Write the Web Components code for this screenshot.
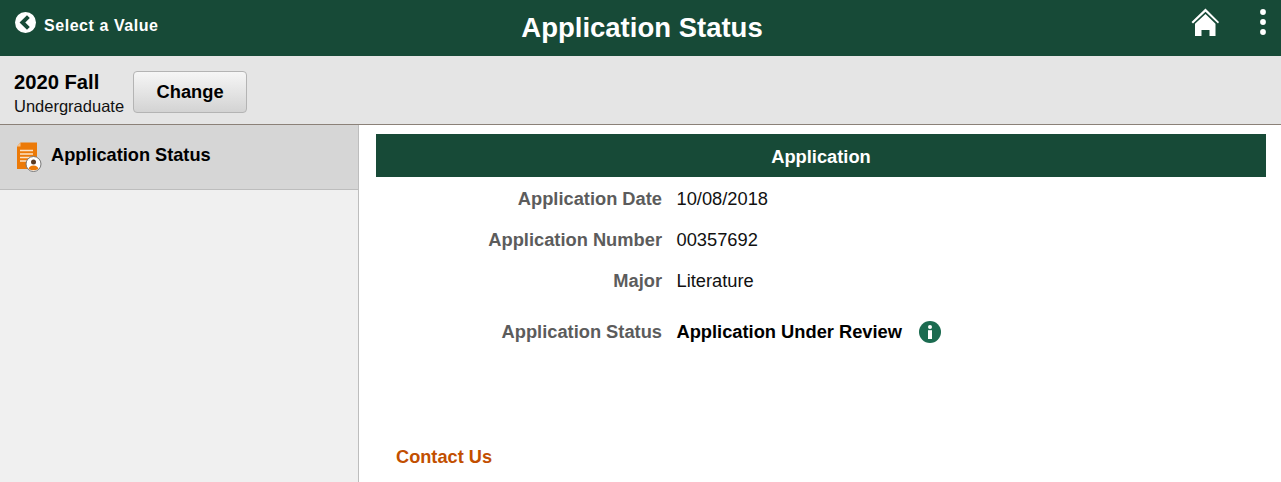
<!DOCTYPE html>
<html lang="en">
<head>
<meta charset="utf-8">
<title>Application Status</title>
<style>
  html, body { margin: 0; height: 100%; overflow: hidden; }
  body { font-family: "Liberation Sans", Arial, sans-serif; display: flex; flex-direction: column; }
</style>
</head>
<body>
<app-banner title-text="Application Status" back-text="Select a Value"></app-banner>
<term-bar term="2020 Fall" career="Undergraduate"></term-bar>
<app-layout>
  <side-nav slot="side" label="Application Status"></side-nav>
  <status-panel slot="main"></status-panel>
</app-layout>

<script>
class AppBanner extends HTMLElement {
  constructor() {
    super();
    this.attachShadow({ mode: "open" });
  }

  connectedCallback() {
    this.shadowRoot.innerHTML = `
      <style>
        :host {
          display: grid;
          grid-template-columns: 1fr auto 1fr;
          align-items: start;
          flex: none;
          height: 56px;
          background: #174a37;
          color: #fff;
        }
        .back {
          display: flex;
          align-items: flex-start;
          gap: 7px;
          padding: 12px 0 0 15px;
          font-size: 16px;
          letter-spacing: .55px;
          font-weight: bold;
          line-height: 21px;
        }
        .back span { margin-top: 3px; }
        h1 {
          margin: 0;
          padding: 12px 0 0 3px;
          font-size: 27.5px;
          line-height: 31px;
          font-weight: bold;
        }
        .tools {
          display: flex;
          justify-content: flex-end;
          gap: 41px;
          padding: 8px 15px 0 0;
        }
        svg { display: block; }
      </style>
      <div class="back">
        <svg width="22" height="22" viewBox="0 0 22 22">
          <circle cx="10.5" cy="10.5" r="10.5" fill="#fff"/>
          <path d="M13.4 4.6 L7.4 10.5 L13.4 16.4" fill="none" stroke="#174a37" stroke-width="4"/>
        </svg>
        <span>${this.getAttribute("back-text")}</span>
      </div>
      <h1>${this.getAttribute("title-text")}</h1>
      <div class="tools">
        <svg width="28" height="29" viewBox="0 0 28 29">
          <path d="M14.5 0.5 L0.5 14 L2 15.5 L14.5 3.8 L27 15.5 L28 14 Z" fill="#fff"/>
          <path d="M14.5 6 L4 15.8 V28 H10.5 V22 H18.5 V28 H24.5 V15.8 Z" fill="#fff"/>
        </svg>
        <svg width="6" height="28" viewBox="0 0 6 28">
          <circle cx="3" cy="4" r="2.9" fill="#fff"/>
          <circle cx="3" cy="14" r="2.9" fill="#fff"/>
          <circle cx="3" cy="24" r="2.9" fill="#fff"/>
        </svg>
      </div>
    `;
  }
}

class TermBar extends HTMLElement {
  constructor() {
    super();
    this.attachShadow({ mode: "open" });
  }

  connectedCallback() {
    this.shadowRoot.innerHTML = `
      <style>
        :host {
          display: flex;
          flex: none;
          gap: 9px;
          height: 68px;
          box-sizing: content-box;
          padding-left: 14px;
          background: #e5e5e5;
          border-bottom: 1px solid #8b8178;
          color: #000;
        }
        .term { padding-top: 15px; }
        .name { font-size: 20.2px; font-weight: bold; line-height: 23px; }
        .career { font-size: 16.5px; line-height: 19px; margin-top: 3px; color: #111; }
        button {
          align-self: flex-start;
          margin-top: 15px;
          width: 114px;
          height: 42px;
          padding: 0;
          font: bold 18.3px "Liberation Sans", Arial, sans-serif;
          color: #000;
          background: linear-gradient(#f6f6f6, #d3d3d3);
          border: 1px solid #b4b4b4;
          border-radius: 4px;
        }
      </style>
      <div class="term">
        <div class="name">${this.getAttribute("term")}</div>
        <div class="career">${this.getAttribute("career")}</div>
      </div>
      <button type="button">Change</button>
    `;
  }
}

class AppLayout extends HTMLElement {
  constructor() {
    super();
    this.attachShadow({ mode: "open" });
  }

  connectedCallback() {
    this.shadowRoot.innerHTML = `
      <style>
        :host {
          display: grid;
          grid-template-columns: 359px 1fr;
          flex: 1;
          min-height: 0;
        }
      </style>
      <slot name="side"></slot>
      <slot name="main"></slot>
    `;
  }
}

class SideNav extends HTMLElement {
  constructor() {
    super();
    this.attachShadow({ mode: "open" });
  }

  connectedCallback() {
    this.shadowRoot.innerHTML = `
      <style>
        :host {
          display: block;
          background: #f0f0f0;
          border-right: 1px solid #bdbdbd;
          height: 100%;
        }
        .item {
          display: flex;
          align-items: flex-start;
          gap: 9px;
          padding: 17px 0 0 16px;
          box-sizing: border-box;
          height: 65px;
          background: #d6d6d6;
          border-bottom: 1px solid #bdbdbd;
          font-size: 18.2px;
          font-weight: bold;
          line-height: 25px;
          color: #000;
        }
        .item span { margin-top: 1px; }
        svg { display: block; flex: none; }
      </style>
      <div class="item">
        <svg width="26" height="31" viewBox="0 0 26 31">
          <path d="M4.5 0.5 H21 V27 H1 V4.5 Z" fill="#ec7a08"/>
          <path d="M4.5 0.5 V4.5 H1 Z" fill="#f8c48c"/>
          <path d="M4 8.5 H17 M4 12 H17 M4 15.5 H17 M4 19 H11" stroke="#fbe3c8" stroke-width="1.5"/>
          <circle cx="17.5" cy="22" r="7.5" fill="#fff" stroke="#777" stroke-width="1"/>
          <circle cx="17.5" cy="20" r="2.5" fill="#5a3a22"/>
          <path d="M12.6 27 Q13.2 23.4 17.5 23.4 Q21.8 23.4 22.4 27 Q17.5 29.4 12.6 27 Z" fill="#ec7a08"/>
        </svg>
        <span>${this.getAttribute("label")}</span>
      </div>
    `;
  }
}

class FieldRow extends HTMLElement {
  constructor() {
    super();
    this.attachShadow({ mode: "open" });
  }

  connectedCallback() {
    this.shadowRoot.innerHTML = `
      <style>
        :host {
          display: grid;
          grid-template-columns: 286px 1fr;
          column-gap: 14.5px;
          font-size: 18.3px;
          line-height: 21px;
        }
        .label { text-align: right; font-weight: bold; color: #5c5c5c; }
        .value { display: flex; align-items: center; color: #111; }
      </style>
      <div class="label">${this.getAttribute("label")}</div>
      <div class="value"><slot></slot></div>
    `;
  }
}

class InfoIcon extends HTMLElement {
  constructor() {
    super();
    this.attachShadow({ mode: "open" });
  }

  connectedCallback() {
    this.shadowRoot.innerHTML = `
      <style>
        :host { display: inline-block; width: 22px; height: 22px; margin: 1px 0 0 17px; }
        svg { display: block; }
      </style>
      <svg width="22" height="22" viewBox="0 0 22 22">
        <circle cx="11" cy="11" r="11" fill="#1b6b50"/>
        <circle cx="11" cy="6" r="2" fill="#fff"/>
        <rect x="9" y="9.2" width="4" height="8.8" fill="#fff"/>
      </svg>
    `;
  }
}

class StatusPanel extends HTMLElement {
  constructor() {
    super();
    this.attachShadow({ mode: "open" });
  }

  connectedCallback() {
    this.shadowRoot.innerHTML = `
      <style>
        :host {
          display: block;
          background: #fff;
          padding: 9px 15px 0 17px;
          height: 100%;
          box-sizing: border-box;
        }
        h2 {
          margin: 0;
          height: 43px;
          background: #174a37;
          color: #fff;
          font-size: 18.3px;
          line-height: 46px;
          font-weight: bold;
          text-align: center;
        }
        .rows { display: flex; flex-direction: column; gap: 20px; padding-top: 11px; }
        .status { margin-top: 9px; align-items: center; }
        b { color: #000; }
        .contact {
          margin: 103px 0 0 20px;
          font-size: 18.2px;
          line-height: 22px;
          font-weight: bold;
          color: #c24f00;
        }
      </style>
      <h2>Application</h2>
      <div class="rows">
        <field-row label="Application Date">10/08/2018</field-row>
        <field-row label="Application Number">00357692</field-row>
        <field-row label="Major">Literature</field-row>
        <field-row class="status" label="Application Status"><b>Application Under Review</b><info-icon></info-icon></field-row>
      </div>
      <div class="contact">Contact Us</div>
    `;
  }
}

customElements.define("app-banner", AppBanner);
customElements.define("term-bar", TermBar);
customElements.define("app-layout", AppLayout);
customElements.define("side-nav", SideNav);
customElements.define("field-row", FieldRow);
customElements.define("info-icon", InfoIcon);
customElements.define("status-panel", StatusPanel);
</script>
</body>
</html>
